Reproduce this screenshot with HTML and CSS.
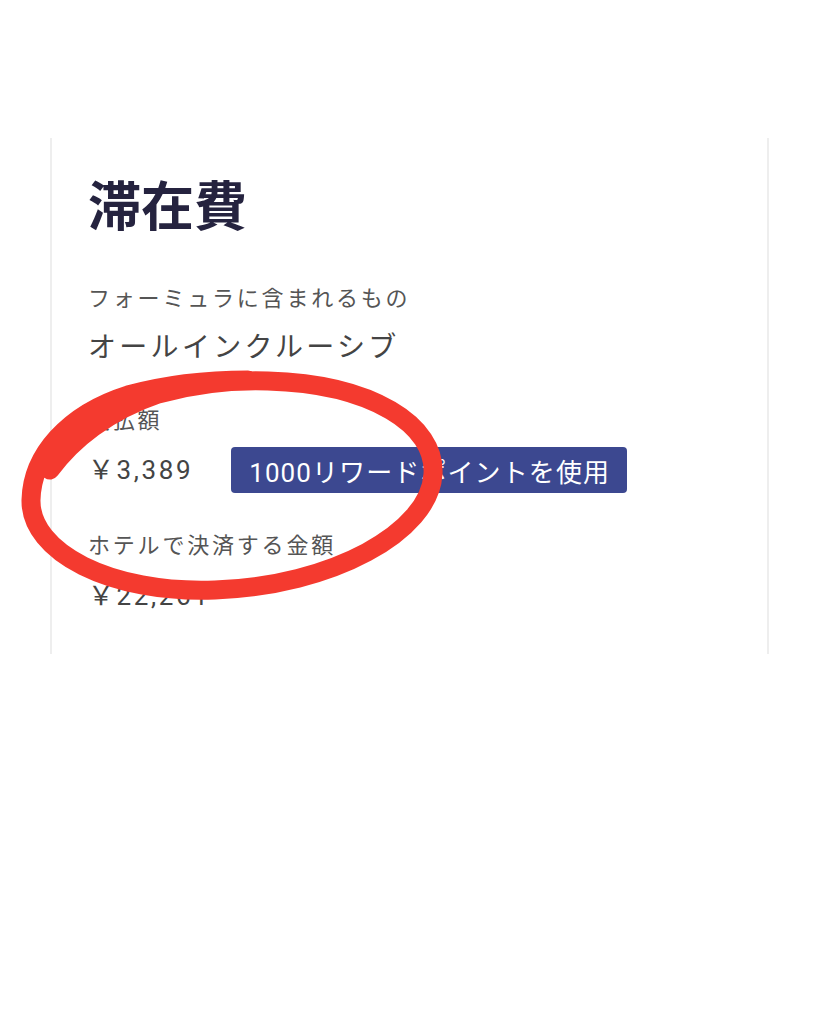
FILE: index.html
```html
<!DOCTYPE html>
<html lang="ja">
<head>
    <meta charset="UTF-8">
    <title>滞在費</title>
    <link rel="stylesheet" href="styles.css">
</head>
<body>

<div class="page">
    <div class="card">
        <h1 class="title">滞在費</h1>

        <div class="group first">
            <p class="label">フォーミュラに含まれるもの</p>
            <p class="value">オールインクルーシブ</p>
        </div>

        <div class="group">
            <p class="label">支払額</p>
            <div class="price_row">
                <span class="price">￥3,389</span>
                <button class="btn">1000リワードポイントを使用</button>
            </div>
        </div>

        <div class="group">
            <p class="label">ホテルで決済する金額</p>
            <p class="price solo">￥22,261</p>
        </div>
    </div>

    <!-- 手書きの丸 -->
    <svg class="scribble" width="819" height="1024" viewBox="0 0 819 1024">
        <path d="M 50 470 C 72 440, 108 411, 158 394 C 198 383, 238 380, 268 381
                 C 372 384, 436 425, 433 474 C 430 532, 332 586, 215 590
                 C 110 594, 30 552, 31 500 C 32 455, 68 414, 128 395
                 C 168 384, 208 380, 248 380"
              fill="none" stroke="#f43a2f" stroke-width="19" stroke-linecap="round"/>
    </svg>
</div>

</body>
</html>
```

FILE: styles.css
```css
* {
    margin: 0;
    padding: 0;
    border: none;
}

body {
    background-color: #ffffff;
    font-family: Roboto, "Noto Sans CJK JP", sans-serif;
}

.page {
    position: relative;
    width: 819px;
    height: 1024px;
    padding-top: 138px;
    box-sizing: border-box;
}

.card {
    margin: 0 50px;
    padding: 40px 36px 38px;
    border-left: 2px solid #eeeeee;
    border-right: 2px solid #eeeeee;
}

.title {
    font-size: 53px;
    line-height: 60px;
    font-weight: 700;
    color: #25233f;
}

.group {
    margin-top: 35px;
}

.group.first {
    margin-top: 43px;
}

.label {
    font-size: 22px;
    line-height: 36px;
    letter-spacing: 2.8px;
    color: #555555;
}

.value {
    margin-top: 11px;
    font-size: 28px;
    line-height: 40px;
    letter-spacing: 3.3px;
    color: #444444;
}

.price_row {
    display: flex;
    align-items: center;
    gap: 38px;
    margin-top: 8px;
}

.price {
    font-size: 26px;
    line-height: 40px;
    letter-spacing: 2.6px;
    color: #444444;
}

.price.solo {
    margin-top: 12px;
}

.btn {
    height: 46px;
    padding: 0 17px 0 18px;
    background-color: #3c4890;
    border-radius: 4px;
    color: #ffffff;
    font-family: inherit;
    font-size: 26px;
    letter-spacing: 1.1px;
    cursor: pointer;
}

.scribble {
    position: absolute;
    left: 0;
    top: 0;
    pointer-events: none;
}
```
